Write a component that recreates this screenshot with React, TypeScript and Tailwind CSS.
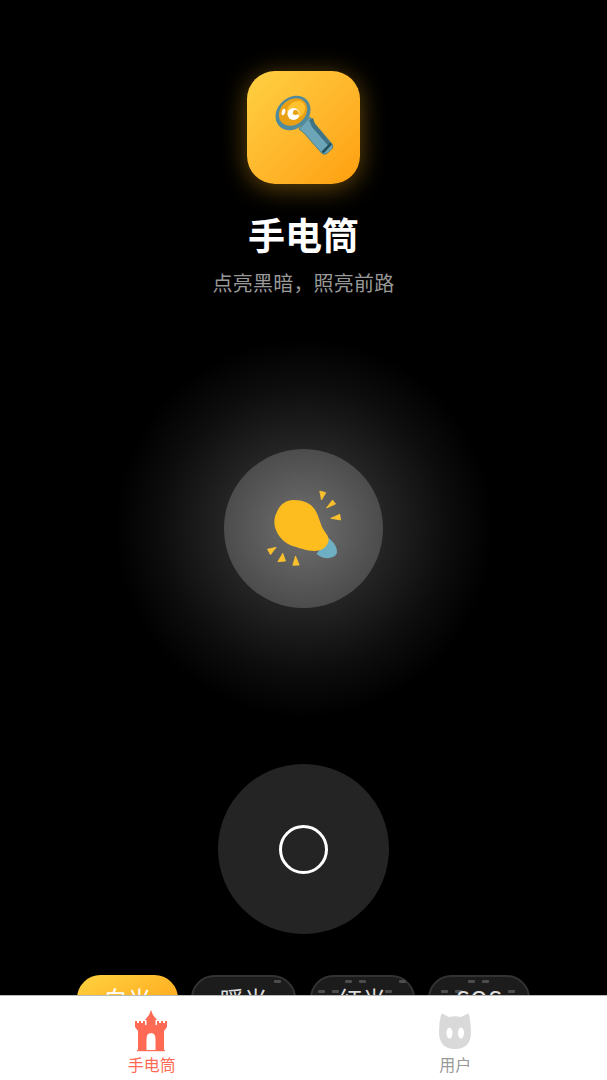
import React from "react";

const cjk = "font-['Noto_Sans_CJK_SC','Noto_Sans',sans-serif]";

/* Hand-held torch shown on the app badge */
function TorchIcon() {
  return (
    <svg width="85" height="85" viewBox="0 0 85 85" fill="none">
      <path d="M38 44 L49 32 L53 38 L71 59 Q72.5 62 71 63.5 L66 68.5 Q63.5 70 61 68.5 L43 48 Z" fill="#6ca5b7" stroke="#3c7386" strokeWidth="0.8" />
      <path d="M48 35 L52 33 L54 39 L70 58.5 L67.5 61 L51 42 Z" fill="#3f7283" />
      <path d="M60.5 66.5 L69.5 57.5 L71 59.5 L62.5 68.5 Z" fill="#24505e" />
      <ellipse cx="32" cy="28" rx="19" ry="15.5" transform="rotate(-42 32 28)" fill="#4f8a9d" />
      <ellipse cx="32" cy="27" rx="15.5" ry="12.3" transform="rotate(-42 32 27)" fill="#e9a015" />
      <ellipse cx="35" cy="25" rx="10" ry="8" transform="rotate(-42 35 25)" fill="#ffc22e" />
      <circle cx="32.5" cy="29" r="6" fill="#fff" />
      <path d="M33.5 25 Q39 25.5 38.5 31 Q35.5 27.5 31 29.5 Z" fill="#ffc22e" />
      <circle cx="34.5" cy="27.5" r="2.5" fill="#e9a015" />
      <ellipse cx="22.5" cy="27" rx="1.8" ry="3.4" transform="rotate(12 22.5 27)" fill="#fff" />
    </svg>
  );
}

/* Light bulb with rays */
function BulbIcon() {
  return (
    <svg width="100" height="100" viewBox="3.5 -2 100 100" fill="none">
      <path d="M78 58 C84 62 88 70 86 74 C83 79 73 80 66 74 Z" fill="#6fafc3" />
      <path d="M43 20 C52 20 60 23 64 29 C68 35 69 41 72 48 C75 53 79 57 78 61 C77 67 71 71 64 71 C56 71 50 68 42 66 C34 63 28 57 25.5 50 C23 44 23.5 38 26 33 C29 25 35 20 43 20Z" fill="#fdbd1f" />
      <g fill="#fbc02d" stroke="#fbc02d" strokeWidth="0.8" strokeLinejoin="round">
        <path d="M69.3 11 L75.3 12.7 L71 20 Z" />
        <path d="M82 20 L85 24 L76 28 Z" />
        <path d="M89.3 34.3 L90 40 L80.3 38.3 Z" />
        <path d="M17 69.3 L25.7 67.3 L20 74.7 Z" />
        <path d="M32.3 73.3 L35 81 L27.3 81.7 Z" />
        <path d="M45 76 L48.7 85 L42.3 85.3 Z" />
      </g>
    </svg>
  );
}

/* Tab icons: castle and cat head */
function CastleIcon() {
  return (
    <svg width="34" height="42" viewBox="1 0 34 42" fill="#ff6a55">
      <path d="M17 0 L19 5 L23 10 L21.5 10 L21.5 15 L23 15 L23 11 L25 11 L25 13 L27 13 L27 11 L29 11 L29 13 L31 13 L31 11 L33 11 L33 17 L30 21 L30 40 L4 40 L4 21 L1 17 L1 11 L3 11 L3 13 L5 13 L5 11 L7 11 L7 13 L9 13 L9 11 L11 11 L11 15 L12.5 15 L12.5 10 L11 10 L15 5 Z" />
      <path d="M12.5 40 L12.5 29 Q12.5 23 17 23 Q21.5 23 21.5 29 L21.5 40 Z" fill="#fff" />
      <rect x="3" y="40" width="28" height="1.2" />
    </svg>
  );
}

function CatIcon() {
  return (
    <svg width="34" height="38" viewBox="0 0 34 38">
      <path d="M3 3 Q3 1 5 2 L11 5 Q17 3.5 23 5 L29 2 Q31 1 31 3 Q33 10 33 20 Q33 37 17 37 Q1 37 1 20 Q1 10 3 3 Z" fill="#d9d9d9" />
      <ellipse cx="11.5" cy="21" rx="3" ry="5.5" fill="#fff" />
      <ellipse cx="23" cy="21" rx="3" ry="5.5" fill="#fff" />
    </svg>
  );
}

/* Small LED dashes printed on inactive chips */
function Dash({ x, y }: { x: string; y: string }) {
  return <span className={`absolute h-[3px] w-[7px] rounded-[1px] bg-[#4d4d4d] ${x} ${y}`} />;
}

function Chip({ label, width, active, children }: { label: string; width: string; active?: boolean; children?: React.ReactNode }) {
  return (
    <div
      className={`relative flex h-[47px] shrink-0 items-center justify-center rounded-[25px] text-[24px] ${width} ${
        active
          ? "bg-gradient-to-br from-[#ffd23f] to-[#ff9f0a] text-white"
          : "border-2 border-[#333] bg-[#1c1c1c] text-[#ddd]"
      }`}
    >
      {children}
      <span className="relative">{label}</span>
    </div>
  );
}

export default function App() {
  return (
    <div className={`relative flex h-[1080px] w-full flex-col items-center overflow-hidden bg-black ${cjk}`}>
      <div className="mt-[71px] flex h-[113px] w-[113px] items-center justify-center rounded-[28px] bg-gradient-to-br from-[#ffd042] to-[#ff9f0a] shadow-[0_4px_26px_rgba(255,180,30,0.4)]">
        <TorchIcon />
      </div>
      <h1 className="mt-[23px] text-[37px] leading-[54px] font-bold text-white">手电筒</h1>
      <p className="mt-[7px] text-[20px] leading-[30px] tracking-[0.2px] text-[#999]">点亮黑暗，照亮前路</p>

      <div className="mt-[40px] flex h-[380px] w-[380px] items-center justify-center rounded-full bg-[radial-gradient(circle_closest-side,rgba(255,255,255,0.24)_0%,rgba(255,255,255,0.14)_42%,rgba(255,255,255,0.05)_75%,rgba(255,255,255,0)_100%)]">
        <div className="flex h-[159px] w-[159px] items-center justify-center rounded-full bg-[radial-gradient(circle_closest-side,#707070_0%,#4c4c4c_100%)]">
          <BulbIcon />
        </div>
      </div>

      <div className="mt-[46px] flex h-[170px] w-[171px] items-center justify-center rounded-full bg-[#242424]">
        <div className="h-[49px] w-[49px] rounded-full border-[3px] border-white" />
      </div>

      <div className="mt-[41px] flex w-[453px] justify-between">
        <Chip label="白光" width="w-[101px]" active />
        <Chip label="暖光" width="w-[105px]">
          <Dash x="left-[81px]" y="top-[3px]" />
        </Chip>
        <Chip label="红光" width="w-[105px]">
          <Dash x="left-[33px]" y="top-[3px]" />
          <Dash x="left-[47px]" y="top-[3px]" />
          <Dash x="left-[6px]" y="top-[13px]" />
          <Dash x="left-[20px]" y="top-[13px]" />
          <Dash x="left-[73px]" y="top-[13px]" />
          <Dash x="left-[87px]" y="top-[3px]" />
        </Chip>
        <Chip label="SOS" width="w-[102px]">
          <Dash x="left-[38px]" y="top-[3px]" />
          <Dash x="left-[52px]" y="top-[3px]" />
          <Dash x="left-[11px]" y="top-[13px]" />
          <Dash x="left-[25px]" y="top-[13px]" />
          <Dash x="left-[78px]" y="top-[13px]" />
        </Chip>
      </div>

      {/* Bottom navigation sits above the page content */}
      <nav className="absolute right-0 bottom-0 left-0 grid h-[85px] grid-cols-2 border-t border-[#bbb] bg-white">
        <div className="flex flex-col items-center">
          <div className="mt-[14px] flex h-[42px] items-center"><CastleIcon /></div>
          <span className="mt-[2px] text-[16px] leading-[20px] text-[#ff6a55]">手电筒</span>
        </div>
        <div className="flex flex-col items-center">
          <div className="mt-[14px] flex h-[42px] items-center"><CatIcon /></div>
          <span className="mt-[2px] text-[16px] leading-[20px] text-[#999]">用户</span>
        </div>
      </nav>
    </div>
  );
}
